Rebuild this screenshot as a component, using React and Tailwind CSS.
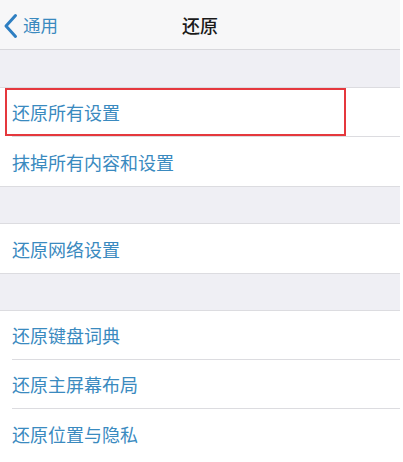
// App.jsx — iOS "还原" settings page

const font = { fontFamily: '"Noto Sans CJK SC", "Noto Sans", sans-serif' }

function Row({ label, divider, highlight }) {
  return (
    <div className="relative h-[49px] bg-white pl-3">
      <div className={`flex h-full items-center ${divider ? 'border-b border-[#dcdce0]' : ''}`}>
        <span className="text-[18px] text-[#3a8abf] leading-none">{label}</span>
      </div>
      {highlight && (
        <div className="absolute left-[5px] top-0 h-[48px] w-[341px] border-2 border-[#e5383d]" />
      )}
    </div>
  )
}

function Gap() {
  return <div className="h-[38px] border-y border-[#dcdce0] bg-[#efeff4]" />
}

export default function App() {
  return (
    <div className="min-h-[462px] w-[403px] bg-white" style={font}>
      <div className="w-[400px]">
        {/* Nav bar */}
        <div className="relative flex h-[50px] items-center border-b border-[#d8d8dc] bg-[#f7f7f8]">
          <div className="flex items-center pl-[3px] pt-[2px]">
            <svg width="15" height="26" viewBox="0 0 15 26" className="mr-[5px]">
              <path d="M12.5 2.5 L3 13 L12.5 23.5" fill="none" stroke="#2e7fc2" strokeWidth="3" strokeLinecap="round" strokeLinejoin="round" />
            </svg>
            <span className="text-[17.5px] text-[#3a8abf]">通用</span>
          </div>
          <span className="absolute left-1/2 top-[16px] -translate-x-1/2 text-[18px] font-medium leading-none text-[#1a1a1a]">还原</span>
        </div>

        <div className="h-[37px] bg-[#efeff4]" />
        <div className="border-t border-[#dcdce0]">
          <Row label="还原所有设置" divider highlight />
          <Row label="抹掉所有内容和设置" />
        </div>
        <Gap />
        <Row label="还原网络设置" />
        <Gap />
        <Row label="还原键盘词典" divider />
        <Row label="还原主屏幕布局" divider />
        <Row label="还原位置与隐私" />
      </div>
    </div>
  )
}
